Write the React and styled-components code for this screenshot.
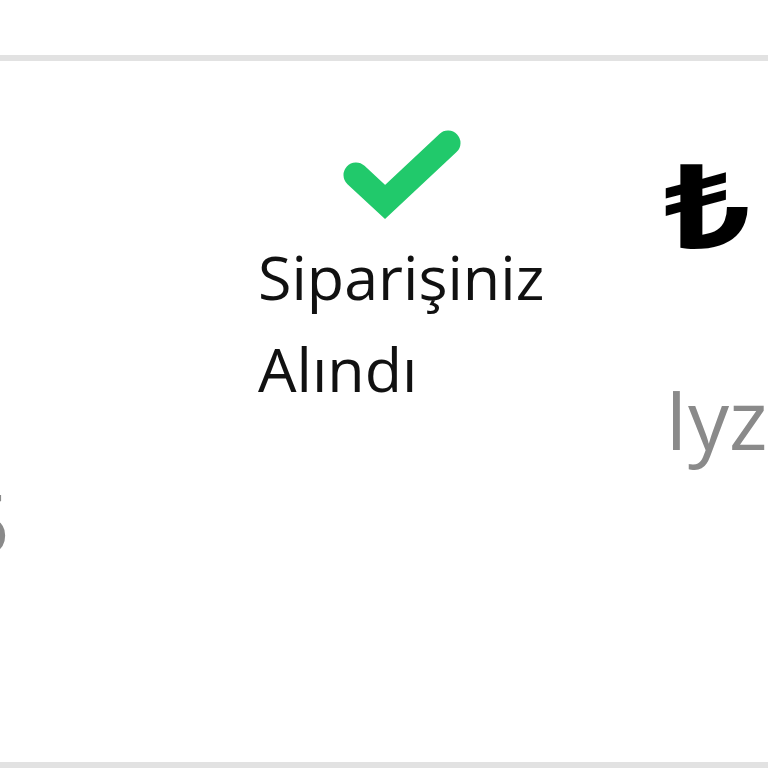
import styled, { createGlobalStyle } from "styled-components";

const GlobalStyle = createGlobalStyle`
  html, body {
    margin: 0;
    padding: 0;
    background: #ffffff;
    overflow: hidden;
  }
`;

const Page = styled.div`
  width: 768px;
  height: 768px;
  padding-top: 55px;
  box-sizing: border-box;
`;

const Table = styled.div`
  height: 713px;
  box-sizing: border-box;
  border-top: 6px solid #e2e2e2;
  border-bottom: 6px solid #e2e2e2;
`;

const Row = styled.div`
  display: grid;
  grid-template-columns: 258px 407px 1fr;
  height: 100%;
`;

const Cell = styled.div`
  display: flex;
  flex-direction: column;
  align-items: ${({ $end }) => ($end ? "flex-end" : "flex-start")};
  padding-top: ${({ $top }) => $top}px;
  padding-right: ${({ $end }) => ($end ? "248px" : "0")};
  min-width: 0;
  white-space: nowrap;
`;

const Muted = styled.span`
  font-family: "Open Sans", "Liberation Sans", sans-serif;
  font-size: 82px;
  line-height: 1;
  color: #8a8a8a;
  margin-top: ${({ $gap }) => $gap || 0}px;
`;

const Status = styled.div`
  font-family: "Open Sans", "Liberation Sans", sans-serif;
  font-size: 61px;
  line-height: 92px;
  color: #111111;
  margin-top: 6px;
`;

const Price = styled.span`
  font-family: "Liberation Sans", "Noto Sans", sans-serif;
  font-weight: 700;
  font-size: 116px;
  line-height: 1;
  color: #000000;
`;

const Currency = styled.span`
  display: inline-block;
  transform: scaleX(1.3);
  transform-origin: left center;
  margin-right: 40px;
`;

const CheckWrap = styled.div`
  align-self: flex-start;
  margin-left: 83px;
`;

function CheckIcon() {
  return (
    <svg width="122" height="92" viewBox="0 0 122 92">
      <polyline
        points="15,46 44,73 107,14"
        fill="none"
        stroke="#21c96b"
        strokeWidth="25"
        strokeLinecap="round"
        strokeLinejoin="miter"
      />
    </svg>
  );
}

export default function App() {
  return (
    <>
      <GlobalStyle />
      <Page>
        <Table>
          <Row>
            <Cell $end $top={420}>
              <Muted>12.05.2025</Muted>
            </Cell>
            <Cell $top={68}>
              <CheckWrap>
                <CheckIcon />
              </CheckWrap>
              <Status>
                Siparişiniz
                <br />
                Alındı
              </Status>
            </Cell>
            <Cell $top={89}>
              <Price>
                <Currency>₺</Currency>1.245,00
              </Price>
              <Muted $gap={111}>Iyzico</Muted>
            </Cell>
          </Row>
        </Table>
      </Page>
    </>
  );
}
